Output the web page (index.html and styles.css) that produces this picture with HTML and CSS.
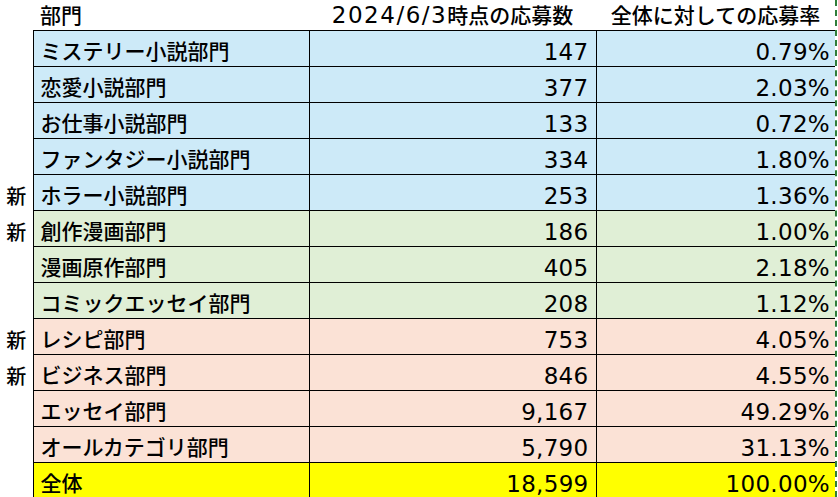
FILE: index.html
```html
<!DOCTYPE html>
<html lang="ja">
<head>
<meta charset="utf-8">
<title>応募数</title>
<link rel="stylesheet" href="styles.css">
</head>
<body>
<div class="sheet">
  <table class="grid">
    <colgroup>
      <col class="c-mark"><col class="c-name"><col class="c-count"><col class="c-rate">
    </colgroup>
    <thead>
      <tr class="head">
        <th class="mark"></th>
        <th class="name">部門</th>
        <th class="center"><span class="latin">2024/6/3</span>時点の応募数</th>
        <th class="center">全体に対しての応募率</th>
      </tr>
    </thead>
    <tbody>
      <tr class="blue"><td class="mark"></td><td class="name">ミステリー小説部門</td><td class="num">147</td><td class="num last">0.79%</td></tr>
      <tr class="blue"><td class="mark"></td><td class="name">恋愛小説部門</td><td class="num">377</td><td class="num last">2.03%</td></tr>
      <tr class="blue"><td class="mark"></td><td class="name">お仕事小説部門</td><td class="num">133</td><td class="num last">0.72%</td></tr>
      <tr class="blue"><td class="mark"></td><td class="name">ファンタジー小説部門</td><td class="num">334</td><td class="num last">1.80%</td></tr>
      <tr class="blue"><td class="mark">新</td><td class="name">ホラー小説部門</td><td class="num">253</td><td class="num last">1.36%</td></tr>
      <tr class="green"><td class="mark">新</td><td class="name">創作漫画部門</td><td class="num">186</td><td class="num last">1.00%</td></tr>
      <tr class="green"><td class="mark"></td><td class="name">漫画原作部門</td><td class="num">405</td><td class="num last">2.18%</td></tr>
      <tr class="green"><td class="mark"></td><td class="name">コミックエッセイ部門</td><td class="num">208</td><td class="num last">1.12%</td></tr>
      <tr class="peach"><td class="mark">新</td><td class="name">レシピ部門</td><td class="num">753</td><td class="num last">4.05%</td></tr>
      <tr class="peach"><td class="mark">新</td><td class="name">ビジネス部門</td><td class="num">846</td><td class="num last">4.55%</td></tr>
      <tr class="peach"><td class="mark"></td><td class="name">エッセイ部門</td><td class="num">9,167</td><td class="num last">49.29%</td></tr>
      <tr class="peach"><td class="mark"></td><td class="name">オールカテゴリ部門</td><td class="num">5,790</td><td class="num last">31.13%</td></tr>
      <tr class="total"><td class="mark"></td><td class="name">全体</td><td class="num">18,599</td><td class="num last">100.00%</td></tr>
    </tbody>
  </table>
</div>
</body>
</html>
```

FILE: styles.css
```css
html, body {
  margin: 0;
  padding: 0;
  background: #ffffff;
  overflow: hidden;
}

body {
  width: 838px;
  height: 497px;
  font-family: "DejaVu Sans", "Noto Sans CJK JP", sans-serif;
  font-size: 21px;
  font-weight: 500;
  color: #000000;
}

.sheet {
  width: 835px;
  height: 497px;
  border-right: 2px dashed #2f7d3a;
  overflow: hidden;
}

.grid {
  border-collapse: collapse;
  table-layout: fixed;
  width: 835px;
}

.c-mark { width: 33px; }
.c-name { width: 276px; }
.c-count { width: 287px; }
.c-rate { width: 239px; }

.grid th,
.grid td {
  padding: 0 7px 2px 7px;
  line-height: 24px;
  vertical-align: bottom;
  white-space: nowrap;
  font-weight: 500;
  overflow: hidden;
}

.head th {
  height: 28px;
  padding-bottom: 2px;
}

.grid th.name { text-align: left; }
.grid th.center { text-align: center; padding-left: 0; padding-right: 0; }

.latin {
  font-size: 23px;
  letter-spacing: 1.5px;
}

.grid tbody td {
  height: 33px;
  border: 1px solid #000000;
}

.grid tbody td.mark {
  border: none;
  background: #ffffff;
  text-align: center;
  padding: 0 0 2px 0;
  font-size: 20px;
}

.grid tbody td.num {
  font-size: 23px;
  letter-spacing: 0.3px;
  padding-right: 7px;
}

.grid tbody td.last {
  border-right: none;
  padding-right: 5px;
}

.name { text-align: left; }
.num { text-align: right; }

.blue td { background: #cdeaf8; }
.green td { background: #e0efd6; }
.peach td { background: #fbe2d6; }
.total td { background: #ffff00; }
```
